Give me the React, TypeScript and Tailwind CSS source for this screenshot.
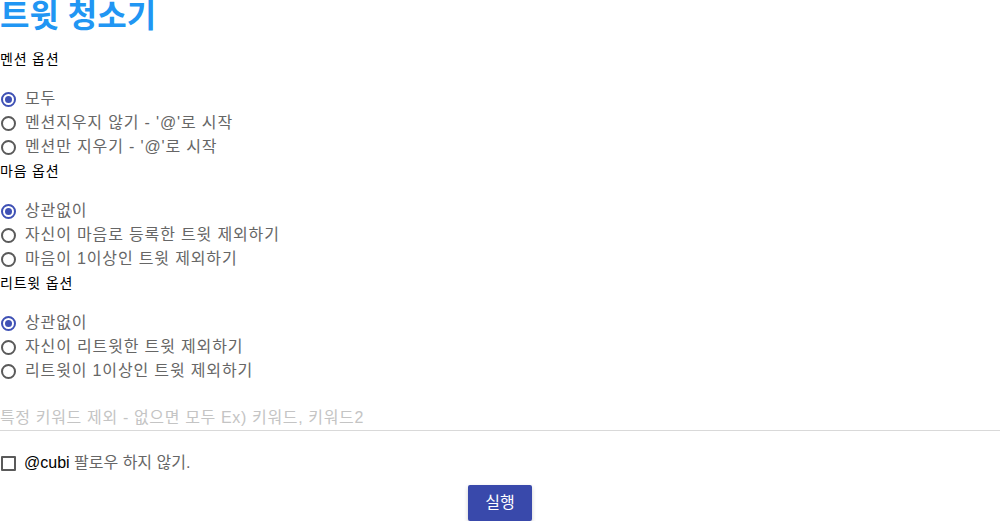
import React, { useState } from "react";

type Opt = { label: string };

function Radio({ checked, label, onClick }: { checked: boolean; label: string; onClick: () => void }) {
  return (
    <label className="flex h-6 cursor-pointer items-center" onClick={onClick}>
      <span
        className={
          checked
            ? "ml-px flex h-[15px] w-[15px] items-center justify-center rounded-full border-2 border-[#3f51b5]"
            : "ml-px flex h-[15px] w-[15px] items-center justify-center rounded-full border-2 border-[#5a5a5a]"
        }
      >
        {checked && <span className="h-[7px] w-[7px] rounded-full bg-[#3f51b5]" />}
      </span>
      <span className="ml-[9px] text-[16px] leading-6 tracking-[0.85px] text-[#666]">{label}</span>
    </label>
  );
}

function Group({ title, options }: { title: string; options: Opt[] }) {
  const [sel, setSel] = useState(0);
  return (
    <div>
      <div className="h-6 text-[14px] leading-6 tracking-[0.8px] text-black">{title}</div>
      <div className="mt-4 flex flex-col">
        {options.map((o, i) => (
          <Radio key={i} checked={sel === i} label={o.label} onClick={() => setSel(i)} />
        ))}
      </div>
    </div>
  );
}

export default function App() {
  const [follow, setFollow] = useState(false);
  return (
    <div
      className="min-h-[521px] bg-white"
      style={{ fontFamily: '"Liberation Sans", "Noto Sans CJK KR", sans-serif' }}
    >
      <h1 className="mb-[15px] text-[32px] font-bold leading-8 text-[#2196f3]">트윗 청소기</h1>
      <Group
        title="멘션 옵션"
        options={[
          { label: "모두" },
          { label: "멘션지우지 않기 - '@'로 시작" },
          { label: "멘션만 지우기 - '@'로 시작" },
        ]}
      />
      <Group
        title="마음 옵션"
        options={[
          { label: "상관없이" },
          { label: "자신이 마음로 등록한 트윗 제외하기" },
          { label: "마음이 1이상인 트윗 제외하기" },
        ]}
      />
      <Group
        title="리트윗 옵션"
        options={[
          { label: "상관없이" },
          { label: "자신이 리트윗한 트윗 제외하기" },
          { label: "리트윗이 1이상인 트윗 제외하기" },
        ]}
      />
      <input
        type="text"
        placeholder="특정 키워드 제외 - 없으면 모두 Ex) 키워드, 키워드2"
        className="mt-4 block h-8 w-full border-b border-[#d9d9d9] bg-transparent pt-[7px] text-[16px] leading-6 tracking-[0.65px] text-[#333] outline-none placeholder:text-[#c4c4c4]"
      />
      <label className="mt-5 flex h-6 cursor-pointer items-center" onClick={() => setFollow(!follow)}>
        <span className="ml-px flex h-[15px] w-[15px] items-center justify-center rounded-[1px] border-2 border-[#5a5a5a]">
          {follow && <span className="h-[7px] w-[7px] bg-[#3f51b5]" />}
        </span>
        <span className="ml-[8px] text-[16px] leading-6 text-[#666]">
          <span className="text-black">@cubi</span> 팔로우 하지 않기.
        </span>
      </label>
      <div className="mt-[10px] flex justify-center">
        <button className="h-9 w-16 rounded-[2px] bg-[#3949ab] text-[16px] text-white shadow-[0_2px_4px_rgba(0,0,0,0.2)]">
          실행
        </button>
      </div>
    </div>
  );
}
